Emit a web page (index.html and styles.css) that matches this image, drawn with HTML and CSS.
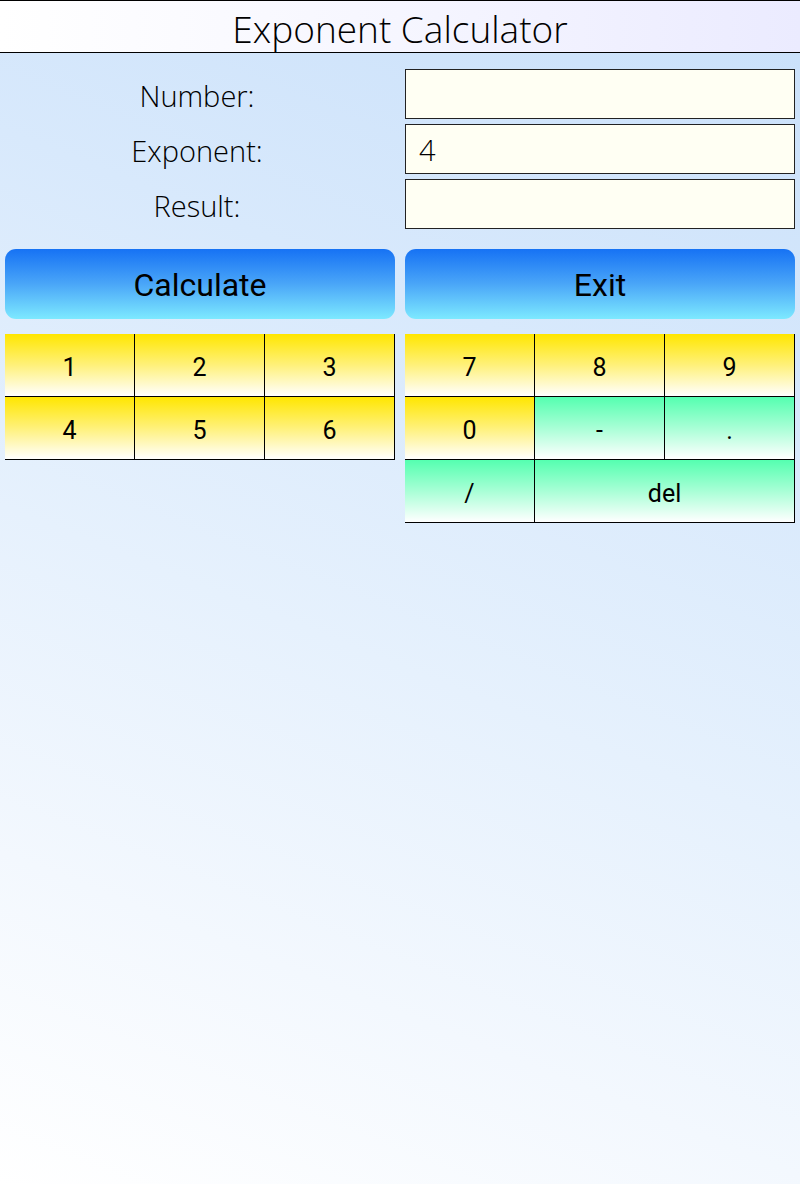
FILE: index.html
```html
<!DOCTYPE html>
<html>
<head>
<meta charset="utf-8">
<title>Exponent Calculator</title>
<link rel="stylesheet" href="styles.css">
</head>
<body>
<header class="title-bar">Exponent Calculator</header>
<main class="content">
  <section class="form">
    <label class="label">Number:</label>
    <div class="field"></div>
    <label class="label">Exponent:</label>
    <div class="field">4</div>
    <label class="label">Result:</label>
    <div class="field"></div>
  </section>
  <section class="actions">
    <button class="action">Calculate</button>
    <button class="action">Exit</button>
  </section>
  <section class="keypads">
    <div class="pad">
      <div class="key yellow">1</div>
      <div class="key yellow">2</div>
      <div class="key yellow">3</div>
      <div class="key yellow">4</div>
      <div class="key yellow">5</div>
      <div class="key yellow">6</div>
    </div>
    <div class="pad">
      <div class="key yellow">7</div>
      <div class="key yellow">8</div>
      <div class="key yellow">9</div>
      <div class="key yellow">0</div>
      <div class="key green">-</div>
      <div class="key green">.</div>
      <div class="key green">/</div>
      <div class="key green span2">del</div>
    </div>
  </section>
</main>
</body>
</html>
```
FILE: styles.css
```css
html, body {
  margin: 0;
  padding: 0;
}
body {
  width: 800px;
  min-height: 1184px;
  background: linear-gradient(22deg, #ffffff 0%, #f3f8fe 22%, #e6f1fd 45%, #d8e9fc 70%, #c9e0fa 100%);
  font-family: "Open Sans", sans-serif;
  color: #000;
}
.title-bar {
  height: 51px;
  border-top: 1px solid #000;
  border-bottom: 1px solid #000;
  background: linear-gradient(to right, #ffffff 0%, #f6f6ff 50%, #ebebff 100%);
  text-align: center;
  font-family: "Open Sans", sans-serif;
  font-weight: 300;
  font-size: 37px;
  line-height: 56px;
}
.content {
  padding: 16px 5px 0 5px;
}
.form {
  display: grid;
  grid-template-columns: 390px 390px;
  grid-auto-rows: 50px;
  column-gap: 10px;
  row-gap: 5px;
}
.label {
  display: flex;
  align-items: center;
  justify-content: center;
  font-family: "Open Sans", sans-serif;
  font-weight: 300;
  font-size: 29px;
  padding-top: 2px;
  padding-right: 6px;
}
.field {
  box-sizing: border-box;
  border: 1px solid #222;
  background: #fffff3;
  font-family: "Open Sans", sans-serif;
  font-weight: 300;
  font-size: 29px;
  line-height: 50px;
  padding-left: 13px;
}
.actions {
  display: grid;
  grid-template-columns: 390px 390px;
  column-gap: 10px;
  margin-top: 20px;
}
.action {
  height: 70px;
  border: none;
  border-radius: 11px;
  background: linear-gradient(to bottom, #1672f4 0%, #4aa6f8 50%, #7de9ff 100%);
  font-family: Roboto, sans-serif;
  font-size: 32px;
  color: #000;
  padding: 0;
  padding-top: 2px;
}
.keypads {
  display: grid;
  grid-template-columns: 390px 390px;
  column-gap: 10px;
  margin-top: 15px;
  align-items: start;
}
.pad {
  display: grid;
  grid-template-columns: 130px 130px 130px;
  grid-auto-rows: 63px;
}
.key {
  box-sizing: border-box;
  border-right: 1px solid #000;
  border-bottom: 1px solid #000;
  display: flex;
  align-items: center;
  justify-content: center;
  font-family: Roboto, sans-serif;
  font-size: 25px;
  padding-top: 4px;
}
.yellow {
  background: linear-gradient(to bottom, #ffe600 0%, #fff17a 50%, #ffffff 100%);
}
.green {
  background: linear-gradient(to bottom, #55ffb0 0%, #a8ffd6 50%, #ffffff 100%);
}
.span2 {
  grid-column: span 2;
}
```
